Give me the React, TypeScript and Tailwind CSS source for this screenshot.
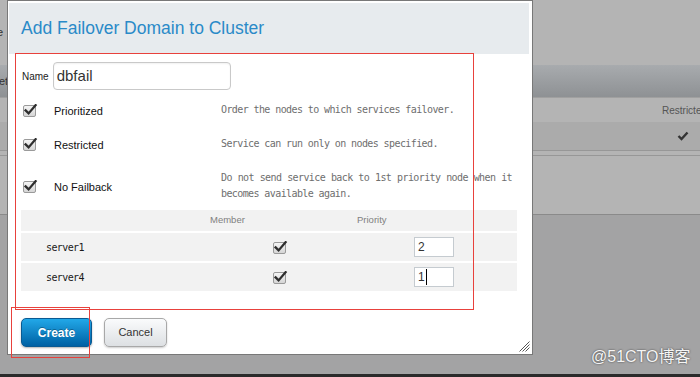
import React from "react";

function Check() {
  return (
    <svg width="15" height="13" viewBox="0 0 15 13" className="block shrink-0">
      <defs>
        <linearGradient id="cbg" x1="0" y1="0" x2="0" y2="1">
          <stop offset="0" stopColor="#f6f6f6" />
          <stop offset="1" stopColor="#d4d4d4" />
        </linearGradient>
      </defs>
      <rect x="0.5" y="1.5" width="12" height="11" rx="1.5" fill="url(#cbg)" stroke="#9a9a9a" />
      <path d="M2.6 6.4 L5.6 9.4 L12.6 1.2" fill="none" stroke="#2e2e2e" strokeWidth="2.3" strokeLinecap="square" />
    </svg>
  );
}

function OptionRow({
  label,
  desc,
  off,
  h,
  first,
}: {
  label: string;
  desc: string;
  off: string;
  h: string;
  first?: boolean;
}) {
  return (
    <div className={`flex items-start ${h} ${first ? "" : "mt-[18px]"}`}>
      <div className={`w-[200px] flex items-start pl-[2px] ${off}`}>
        <Check />
        <span className="ml-[16px] text-[11px] leading-[16px] text-[#111] mt-[-1px]">{label}</span>
      </div>
      <div className="w-[291px] font-['DejaVu_Sans_Mono',monospace] text-[10px] tracking-[-0.6px] leading-[16px] text-[#6e6e6e] text-justify">
        {desc}
      </div>
    </div>
  );
}

export default function App() {
  return (
    <div className="relative w-[700px] h-[377px] overflow-hidden bg-[#a3a3a4] font-['Liberation_Sans',Arial,sans-serif]">
      {/* background page */}
      <div className="flex flex-col h-full">
        <div className="h-[65px] bg-[#b4b4b4] flex items-center text-[11px] text-[#333]">
          <span className="-ml-[3px]">e</span>
        </div>
        <div className="h-[32px] bg-linear-to-b from-[#a8abae] to-[#8e9194] flex items-center text-[11px] text-[#333]">
          <span className="-ml-[1px]">et</span>
        </div>
        <div className="h-[25px] bg-[#b4b4b4] border-t border-solid border-[color:#a0a0a0] flex items-center whitespace-nowrap">
          <span className="pl-[662px] text-[10px] text-[#555]">Restricted</span>
        </div>
        <div className="h-[28px] bg-[#ababab] flex items-center">
          <svg width="12" height="10" viewBox="0 0 12 10" className="ml-[677px]">
            <path d="M1.5 5 L4.5 8 L10.5 1.5" fill="none" stroke="#333" strokeWidth="2.4" />
          </svg>
        </div>
        <div className="h-[1px] bg-[#979797]" />
        <div className="h-[4px] bg-[#b4b4b4]" />
        <div className="h-[1px] bg-[#979797]" />
        <div className="h-[58px] bg-[#b4b4b4]" />
        <div className="h-[1px] bg-[#8a8a8a]" />
        <div className="flex-1 bg-[#a3a3a4]" />
        <div className="h-[3px] bg-[#2a2a2a]" />
      </div>

      {/* dialog */}
      <div className="absolute left-[7px] top-0 w-[526px] h-[355px] border border-solid border-[color:#787878] bg-white pt-[2px] pl-[1px] pr-[3px]">
        <div className="h-[51px] bg-[#e7ebee] flex items-center pl-[12px] text-[17.5px] text-[#2a8ac8]">
          Add Failover Domain to Cluster
        </div>

        <div className="pl-[12px]">
          {/* name */}
          <div className="mt-[8px] flex items-center h-[28px]">
            <span className="ml-[1px] text-[10px] text-[#222]">Name</span>
            <div className="ml-[4px] w-[178px] h-[28px] border border-solid border-[color:#c9c9c9] rounded-[4px] flex items-center pl-[3px] text-[15px] text-[#333] shadow-[inset_0_1px_2px_rgba(0,0,0,0.06)]">
              dbfail
            </div>
          </div>

          {/* options */}
          <div className="mt-[12px]">
            <OptionRow first h="h-[16px]" off="mt-[2px]" label="Prioritized" desc="Order the nodes to which services failover." />
            <OptionRow h="h-[16px]" off="mt-[2px]" label="Restricted" desc="Service can run only on nodes specified." />
            <OptionRow
              h="h-[32px]"
              off="mt-[10px]"
              label="No Failback"
              desc="Do not send service back to 1st priority node when it becomes available again."
            />
          </div>

          {/* table */}
          <div className="mt-[8px] w-[496px]">
            <div className="h-[21px] bg-[#f2f2f2] flex items-center text-[9.5px] text-[#808080]">
              <span className="ml-[189px] w-[147px]">Member</span>
              <span>Priority</span>
            </div>
            {[
              { name: "server1", pr: "2", caret: false },
              { name: "server4", pr: "1", caret: true },
            ].map((r) => (
              <div key={r.name} className="mt-[2px] h-[28px] bg-[#f2f2f2] flex items-center">
                <span className="pl-[25px] w-[252px] font-['DejaVu_Sans_Mono',monospace] text-[10px] tracking-[-0.6px] text-[#1a1a1a]">
                  {r.name}
                </span>
                <Check />
                <div className="ml-[126px] w-[40px] h-[20px] border border-solid border-[color:#c5cbd0] bg-white flex items-center pl-[3px] text-[12px] text-[#333]">
                  <span>{r.pr}</span>
                  {r.caret && <span className="ml-[1px] w-[1px] h-[16px] bg-black" />}
                </div>
              </div>
            ))}
          </div>

          {/* buttons */}
          <div className="mt-[27px] flex">
            <div className="w-[71px] h-[29px] rounded-[5px] border border-solid border-[color:#0a5a92] bg-linear-to-b from-[#22a8e8] to-[#0061a4] flex items-center justify-center text-white font-bold text-[12px] shadow-[0_1px_2px_rgba(0,0,0,0.3)] [text-shadow:0_-1px_0_rgba(0,0,0,0.3)]">
              Create
            </div>
            <div className="ml-[12px] w-[63px] h-[29px] rounded-[5px] border border-solid border-[color:#a8a8a8] bg-linear-to-b from-[#fafbfc] to-[#dde0e3] flex items-center justify-center text-[#333] text-[11px] shadow-[0_1px_2px_rgba(0,0,0,0.2)]">
              Cancel
            </div>
          </div>
        </div>

        {/* resize grip */}
        <svg width="11" height="11" viewBox="0 0 11 11" className="absolute right-[2px] bottom-[2px]">
          <path d="M0.5 10.5 L10.5 0.5 M3.5 10.5 L10.5 3.5 M6.5 10.5 L10.5 6.5" stroke="#555" strokeWidth="1" />
        </svg>
      </div>

      {/* annotations */}
      <div className="absolute left-[15px] top-[53px] w-[459px] h-[257px] border border-solid border-[color:#e8413c]" />
      <div className="absolute left-[11px] top-[307px] w-[79px] h-[51px] border border-solid border-[color:#e8413c]" />

      {/* watermark */}
      <div className="absolute left-[591px] top-[347px] text-[16px] leading-[20px] text-[#f5f5f5] font-['Liberation_Sans','Noto_Sans_CJK_SC',sans-serif] [text-shadow:0_0_2px_rgba(0,0,0,0.7)] whitespace-nowrap">
        @51CTO博客
      </div>
    </div>
  );
}
